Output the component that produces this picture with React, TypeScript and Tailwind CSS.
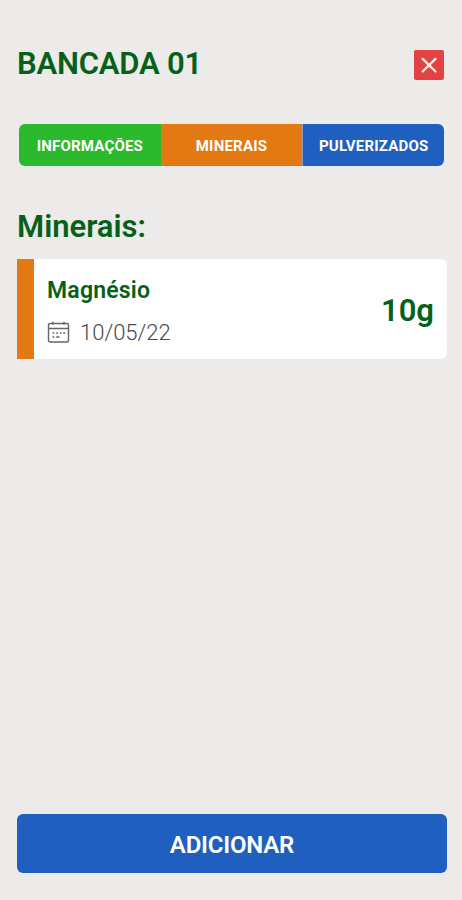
import React from 'react'

const tabs = [
  { label: 'INFORMAÇÕES', className: 'bg-[#2bba2d]' },
  { label: 'MINERAIS', className: 'bg-[#e37913]' },
  { label: 'PULVERIZADOS', className: 'bg-[#1e5fc0] border-l border-[#8b9fc8]' },
]

const minerals = [{ name: 'Magnésio', date: '10/05/22', amount: '10g' }]

const CalendarIcon = () => (
  <svg width="23" height="23" viewBox="0 0 23 23" fill="none" stroke="#666666" strokeWidth="1.4">
    <rect x="1.5" y="2.5" width="20" height="18.5" rx="1.5" />
    <path d="M1.5 7.5h20M5.8 0.8v3M17 0.8v3" />
    <path d="M5.5 12h1.8M9.2 12h1.8M12.8 12h1.8M16.3 12h1.8M5.5 16h1.8M9.2 16h3.2" />
  </svg>
)

const CloseIcon = () => (
  <svg width="30" height="30" viewBox="0 0 30 30" fill="none" stroke="#fdeeee" strokeWidth="2.3">
    <path d="M8.7 8.9l12.8 12.6M21.5 8.9l-12.8 12.6" strokeLinecap="round" />
  </svg>
)

export default function App() {
  return (
    <main className="flex h-screen flex-col bg-[#ecebe9] pb-[27px] pl-[17px] pr-[15px] pt-[50px] font-['Roboto',sans-serif] text-[#07601a]">
      <header className="flex h-[30px] items-center justify-between pr-[3px]">
        <h1 className="-mt-0.5 text-[31px] font-semibold leading-[30px] tracking-[-0.2px]">BANCADA 01</h1>
        <button aria-label="Fechar" className="h-[30px] w-[30px] rounded-[2px] bg-[#e24242]">
          <CloseIcon />
        </button>
      </header>

      <nav className="ml-0.5 mr-[3px] mt-11 grid h-[42px] grid-cols-3 overflow-hidden rounded-md">
        {tabs.map((tab) => (
          <button
            key={tab.label}
            className={`pt-0.5 text-[15px] font-bold tracking-[0.2px] text-white ${tab.className}`}
          >
            {tab.label}
          </button>
        ))}
      </nav>

      <h2 className="mt-[45px] text-[31px] font-semibold leading-8">Minerais:</h2>

      <ul className="mt-4">
        {minerals.map((mineral) => (
          <li
            key={mineral.name}
            className="flex h-[100px] items-center justify-between rounded-r-md border-l-[17px] border-[#e37913] bg-white pl-[13px] pr-[13px] pt-[5px]"
          >
            <div>
              <h3 className="text-[23px] font-semibold leading-7 tracking-[0.2px]">{mineral.name}</h3>
              <div className="mt-3.5 flex items-center gap-2.5 text-[22px] leading-7 text-[#4a4a4a]">
                <CalendarIcon />
                <span className="font-light">{mineral.date}</span>
              </div>
            </div>
            <strong className="text-[31px] font-semibold">{mineral.amount}</strong>
          </li>
        ))}
      </ul>

      <button className="mt-auto h-[59px] shrink-0 rounded-md bg-[#1e5fc0] pt-0.5 text-[24px] font-semibold tracking-[-0.2px] text-white">
        ADICIONAR
      </button>
    </main>
  )
}
